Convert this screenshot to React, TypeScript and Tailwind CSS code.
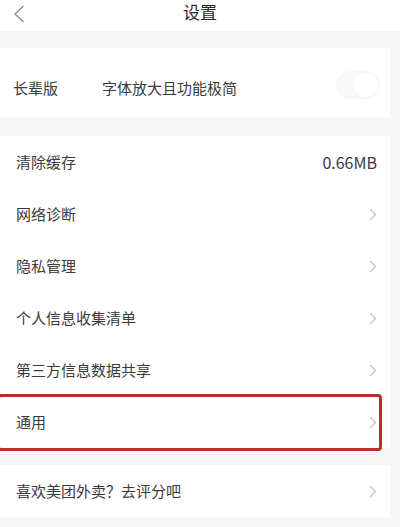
import React from "react";

const Chevron = () => (
  <svg width="8" height="13" viewBox="0 0 8 13" fill="none">
    <path d="M1.5 1.5L6.5 6.5L1.5 11.5" stroke="#c6c6c6" strokeWidth="1.4" strokeLinecap="round" strokeLinejoin="round" />
  </svg>
);

const Row = ({ label, right, children }: { label: string; right?: React.ReactNode; children?: React.ReactNode }) => (
  <div className="relative flex h-[52px] items-center justify-between pl-4 pr-[13px]">
    <span className="text-[15px] text-[#3a3a3a]">{label}</span>
    {right ?? <Chevron />}
    {children}
  </div>
);

export default function App() {
  return (
    <div
      className="h-[527px] w-[400px] overflow-hidden bg-[#f6f6f7]"
      style={{ fontFamily: '"Noto Sans CJK SC", "Noto Sans", sans-serif' }}
    >
      <div className="relative flex h-[31px] items-center justify-center bg-white">
        <svg className="absolute left-[12px] top-[5px]" width="14" height="18" viewBox="0 0 14 18" fill="none">
          <path d="M11 1.5L3 9L11 16.5" stroke="#8a8a8a" strokeWidth="1.4" strokeLinecap="round" strokeLinejoin="round" />
        </svg>
        <span className="-mt-[7px] text-[17px] text-[#2a2a2a]">设置</span>
      </div>
      <div className="mt-[17px] flex h-[69px] w-[390px] items-center bg-white pl-[13px] pr-[10px] pt-[11px]">
        <span className="text-[15px] text-[#3a3a3a]">长辈版</span>
        <span className="ml-[44px] text-[15px] text-[#3a3a3a]">字体放大且功能极简</span>
        <div className="-mt-[6px] ml-auto flex h-[28px] w-[44px] items-center rounded-full bg-[#f8f8f8] px-[2px]">
          <div className="ml-auto h-[24px] w-[24px] rounded-full bg-white" />
        </div>
      </div>
      <div className="mt-[19px] w-[390px] bg-white">
        <Row label="清除缓存" right={<span className="text-[16px] text-[#3a3a3a]">0.66MB</span>} />
        <Row label="网络诊断" />
        <Row label="隐私管理" />
        <Row label="个人信息收集清单" />
        <Row label="第三方信息数据共享" />
        <Row label="通用">
          <div className="pointer-events-none absolute -left-[3px] -top-[2px] -bottom-[3px] right-[8px] rounded-[4px] border-[3px] border-[#b8302a]" />
        </Row>
      </div>
      <div className="mt-[17px] w-[390px] bg-white">
        <Row label="喜欢美团外卖？去评分吧" />
      </div>
    </div>
  );
}
